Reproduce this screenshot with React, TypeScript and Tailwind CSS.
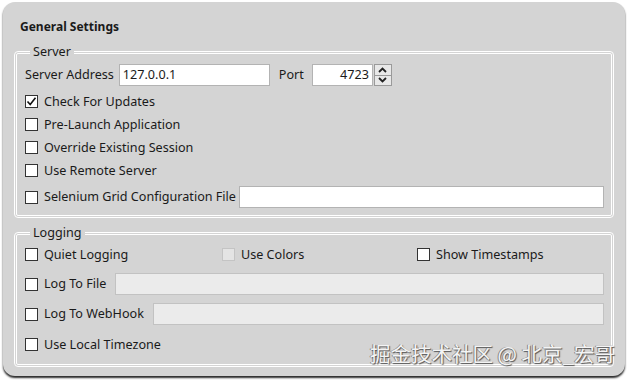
import { ReactNode } from "react";

const Box = ({ checked = false, disabled = false }: { checked?: boolean; disabled?: boolean }) => (
  <span
    className={`flex h-[13px] w-[13px] shrink-0 items-center justify-center border ${
      disabled ? "border-[#c4c4c4] bg-[#e4e4e4]" : "border-[#333] bg-white"
    }`}
  >
    {checked && (
      <svg width="11" height="11" viewBox="0 0 11 11">
        <path d="M1.5 5.5 L4.2 8.5 L9.5 1.8" fill="none" stroke="#111" strokeWidth="1.6" />
      </svg>
    )}
  </span>
);

const Check = ({
  label,
  checked,
  disabled,
  className = "",
}: {
  label: string;
  checked?: boolean;
  disabled?: boolean;
  className?: string;
}) => (
  <label className={`flex h-[23px] items-center gap-[6px] ${className}`}>
    <Box checked={checked} disabled={disabled} />
    <span className="whitespace-nowrap pt-[1px]">{label}</span>
  </label>
);

const Field = ({ value = "", disabled = false, className = "" }: { value?: string; disabled?: boolean; className?: string }) => (
  <div
    className={`flex h-[22px] items-center border px-[3px] pt-[1px] ${
      disabled ? "border-[#c2c2c2] bg-[#ebebeb]" : "border-[#b3b3b3] bg-white"
    } ${className}`}
  >
    {value}
  </div>
);

const Group = ({ title, children, className = "" }: { title: string; children: ReactNode; className?: string }) => (
  <fieldset className={`mx-[11px] rounded-[4px] border-[3px] border-double border-white pl-[8px] pr-[7px] ${className}`}>
    <legend className="ml-[5px] px-[3px] leading-[16px]">{title}</legend>
    {children}
  </fieldset>
);

export default function App() {
  return (
    <div className="h-[380px] w-[628px] bg-white px-[3px] pt-[2px] pb-[4px] font-['Noto_Sans',sans-serif] text-[12.6px] text-[#1a1a1a]">
      <div className="relative flex h-full flex-col rounded-[12px] bg-[#d4d4d4] shadow-[0_2px_2px_#2a2a2a]">
        <div className="pl-[17px] pt-[17px] text-[12px] font-bold leading-[16px]">General Settings</div>

        <Group title="Server" className="mt-[9px] pb-[7px]">
          <div className="mt-[4px] flex h-[22px] items-center">
            <span className="pt-[1px]">Server Address</span>
            <Field value="127.0.0.1" className="ml-[5px] w-[151px]" />
            <span className="ml-[9px] pt-[1px]">Port</span>
            <Field value="4723" className="ml-[8px] w-[61px] justify-end" />
            <div className="ml-[1px] flex h-[22px] w-[18px] flex-col border border-[#9a9a9a] bg-[#e8e8e8]">
              <div className="flex flex-1 items-center justify-center border-b border-[#9a9a9a]">
                <svg width="9" height="6" viewBox="0 0 9 6">
                  <path d="M1 5 L4.5 1.5 L8 5" fill="none" stroke="#222" strokeWidth="1.8" />
                </svg>
              </div>
              <div className="flex flex-1 items-center justify-center">
                <svg width="9" height="6" viewBox="0 0 9 6">
                  <path d="M1 1 L4.5 4.5 L8 1" fill="none" stroke="#222" strokeWidth="1.8" />
                </svg>
              </div>
            </div>
          </div>
          <Check label="Check For Updates" checked className="mt-[4px]" />
          <Check label="Pre-Launch Application" />
          <Check label="Override Existing Session" />
          <Check label="Use Remote Server" />
          <div className="mt-[4px] flex h-[22px] items-center">
            <Check label="Selenium Grid Configuration File" />
            <Field className="ml-[3px] flex-1" />
          </div>
        </Group>

        <Group title="Logging" className="mt-[7px] pb-[8px]">
          <div className="mt-[2px] flex">
            <Check label="Quiet Logging" className="w-[197px]" />
            <Check label="Use Colors" disabled className="w-[195px]" />
            <Check label="Show Timestamps" />
          </div>
          <div className="mt-[7px] flex h-[22px] items-center">
            <Check label="Log To File" />
            <Field disabled className="ml-[9px] flex-1" />
          </div>
          <div className="mt-[8px] flex h-[22px] items-center">
            <Check label="Log To WebHook" />
            <Field disabled className="ml-[9px] flex-1" />
          </div>
          <Check label="Use Local Timezone" className="mt-[8px]" />
        </Group>

        <div className="absolute bottom-[11px] right-[10px] font-['Noto_Sans_CJK_SC',sans-serif] text-[20.5px] leading-[24px] text-[#f4f4f4] [text-shadow:1px_1px_1px_#555,-1px_0_0_#888]">
          掘金技术社区 @ 北京_宏哥
        </div>
      </div>
    </div>
  );
}
